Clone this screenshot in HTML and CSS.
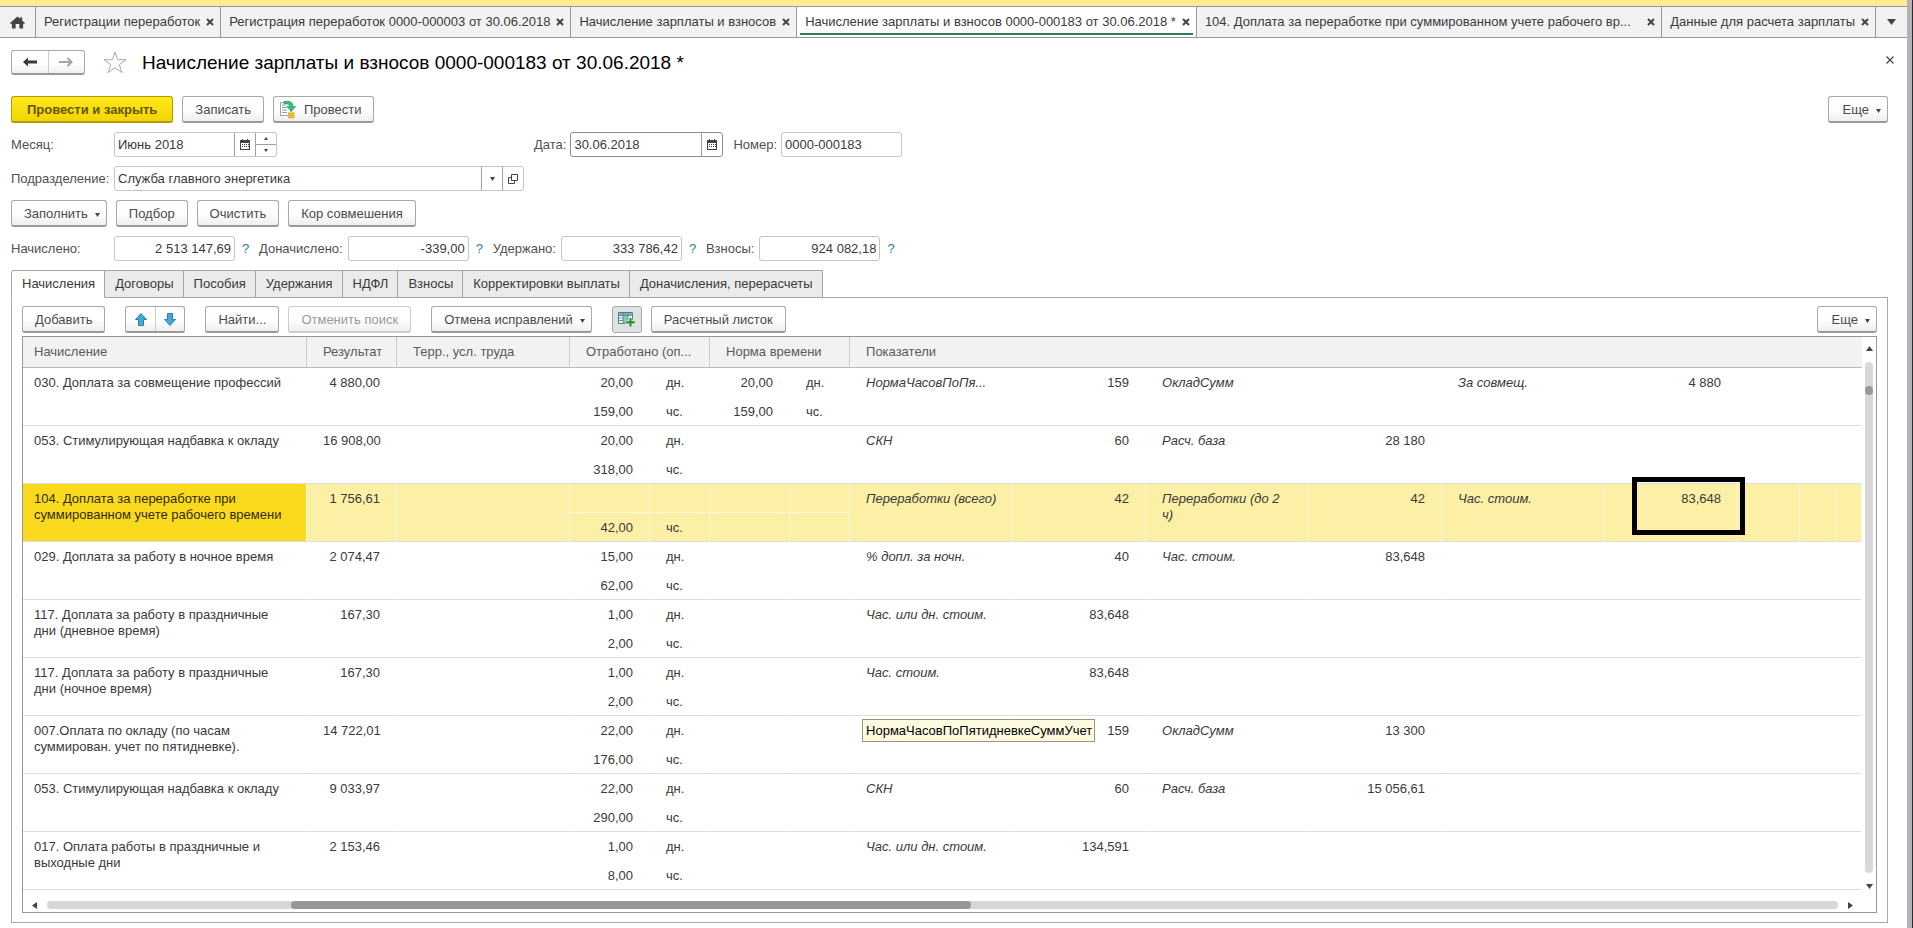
FILE: index.html
```html
<!DOCTYPE html>
<html lang="ru">
<head>
  <meta charset="UTF-8" />
  <title>Начисление зарплаты и взносов</title>
  <link rel="stylesheet" href="styles.css">
</head>
<body>

<!-- общие иконки -->
<svg class="sprite" aria-hidden="true">
  <symbol id="i-calendar" viewBox="0 0 10 11">
    <path d="M0 1h10v10H0zM2 0h1v1H2zM7 0h1v1H7z" fill="#444"/>
    <path d="M1 4h8v6H1z" fill="#fff"/>
    <path d="M2 5h1v1H2zM4 5h1v1H4zM6 5h1v1H6zM8 5h1v1H8zM2 7h1v1H2zM4 7h1v1H4zM6 7h1v1H6zM8 7h1v1H8z" fill="#444"/>
  </symbol>
  <symbol id="i-close" viewBox="0 0 8 8">
    <path d="M1 1l6 6M7 1L1 7" stroke="#444" stroke-width="2"/>
  </symbol>
  <symbol id="i-down" viewBox="0 0 5 4">
    <path d="M0 0h5L2.500 4z" fill="#444"/>
  </symbol>
</svg>

<div class="window">
  <div class="top-strip"></div>

  <nav class="open-tabs" aria-label="Открытые окна">
    <button class="open-tab home" aria-label="Начальная страница">
      <svg width="15" height="13" viewBox="0 0 16 13"><path d="M8 0L0 7l1 1 1-.5V13h4V8h4v5h4V7.500l1 .5 1-1-3-2.600V1h-2v1.600z" fill="#444"/></svg>
    </button>
    <button class="open-tab"><span>Регистрации переработок</span><svg class="x"><use href="#i-close"/></svg></button>
    <button class="open-tab"><span>Регистрация переработок 0000-000003 от 30.06.2018</span><svg class="x"><use href="#i-close"/></svg></button>
    <button class="open-tab"><span>Начисление зарплаты и взносов</span><svg class="x"><use href="#i-close"/></svg></button>
    <button class="open-tab active"><span>Начисление зарплаты и взносов 0000-000183 от 30.06.2018 *</span><svg class="x"><use href="#i-close"/></svg></button>
    <button class="open-tab wide"><span>104. Доплата за переработке при суммированном учете рабочего вр...</span><svg class="x"><use href="#i-close"/></svg></button>
    <button class="open-tab"><span>Данные для расчета зарплаты</span><svg class="x"><use href="#i-close"/></svg></button>
    <button class="open-tab more" aria-label="Все окна"><svg width="9" height="6" viewBox="0 0 9 6"><path d="M0 0h9L4.500 6z" fill="#444"/></svg></button>
  </nav>

  <main class="form">
    <header class="title-bar">
      <div class="btn-pair history">
        <button aria-label="Назад"><svg width="14" height="10" viewBox="0 0 14 10"><path d="M0 5l5-4.500v3h9v3H5v3z" fill="#3a3a3a"/></svg></button>
        <button aria-label="Вперед"><svg width="14" height="10" viewBox="0 0 14 10"><path d="M0 5h13M8.500 1l4 4-4 4" fill="none" stroke="#a5a5a5" stroke-width="2"/></svg></button>
      </div>
      <svg class="star" width="24" height="23" viewBox="0 0 24 23"><path d="M12 1l2.700 7.700H23l-6.600 4.900 2.500 8L12 16.800l-6.900 4.800 2.500-8L1 8.700h8.300z" fill="#fff" stroke="#a3abb5"/></svg>
      <h1>Начисление зарплаты и взносов 0000-000183 от 30.06.2018 *</h1>
      <button class="close-form" aria-label="Закрыть"><svg width="8" height="8" viewBox="0 0 8 8"><path d="M.5.5l7 7M7.500.5l-7 7" stroke="#444" stroke-width="1.200"/></svg></button>
    </header>

    <div class="row commands">
      <button class="btn primary">Провести и закрыть</button>
      <button class="btn">Записать</button>
      <button class="btn with-icon">
        <svg width="16" height="19" viewBox="0 0 16 19">
          <path d="M.5 2.500h10.500v13H.5z" fill="#fff" stroke="#9aa5ab"/>
          <path d="M2 5h4M2 7.500h5M2 10h5M2 12.500h5" stroke="#8aa0ac"/>
          <path d="M4 1.500c5-1 9 .5 9 5h2.500L11.300 11.500 7 6.500h2.700C9.700 4.500 8 3.500 4 3.700z" fill="#2fc47b" stroke="#17834b" stroke-width=".6"/>
          <path d="M8 12h6.500v6H8z" fill="#f5d33f"/>
          <path d="M8 13.800h6.500M8 15.800h6.500M8 17.800h6.500" stroke="#b9962a" stroke-width=".7"/>
        </svg>
        Провести
      </button>
      <button class="btn menu right">Еще<svg class="arr"><use href="#i-down"/></svg></button>
    </div>

    <div class="row fields">
      <label class="lead" for="month">Месяц:</label>
      <div class="field">
        <input class="short" id="month" type="text" value="Июнь 2018">
        <button aria-label="Календарь"><svg width="10" height="11"><use href="#i-calendar"/></svg></button>
        <div class="spin">
          <button aria-label="Больше"><svg width="4" height="3" viewBox="0 0 4 3"><path d="M0 3h4L2 0z" fill="#444"/></svg></button>
          <button aria-label="Меньше"><svg width="4" height="3" viewBox="0 0 4 3"><path d="M0 0h4L2 3z" fill="#444"/></svg></button>
        </div>
      </div>
      <label class="date-label" for="date">Дата:</label>
      <div class="field dark">
        <input class="date" id="date" type="text" value="30.06.2018">
        <button aria-label="Календарь"><svg width="10" height="11"><use href="#i-calendar"/></svg></button>
      </div>
      <label class="number-label" for="number">Номер:</label>
      <div class="field"><input class="short" id="number" type="text" value="0000-000183"></div>
    </div>

    <div class="row fields">
      <label class="lead" for="dept">Подразделение:</label>
      <div class="field">
        <input class="long" id="dept" type="text" value="Служба главного энергетика">
        <button aria-label="Выбрать"><svg width="5" height="4"><use href="#i-down"/></svg></button>
        <button aria-label="Открыть"><svg width="10" height="10" viewBox="0 0 10 10"><path d="M3.500.5h6v6h-6zM3.500 3.500h-3v6h6v-3" fill="none" stroke="#444"/></svg></button>
      </div>
    </div>

    <div class="row commands">
      <button class="btn menu">Заполнить<svg class="arr"><use href="#i-down"/></svg></button>
      <button class="btn">Подбор</button>
      <button class="btn">Очистить</button>
      <button class="btn">Кор совмешения</button>
    </div>

    <div class="row totals">
      <label class="lead" for="accrued">Начислено:</label>
      <div class="field"><input class="short num" id="accrued" type="text" value="2 513 147,69"></div><a class="help" href="#">?</a>
      <label for="added">Доначислено:</label>
      <div class="field"><input class="short num" id="added" type="text" value="-339,00"></div><a class="help" href="#">?</a>
      <label for="withheld">Удержано:</label>
      <div class="field"><input class="short num" id="withheld" type="text" value="333 786,42"></div><a class="help" href="#">?</a>
      <label for="fees">Взносы:</label>
      <div class="field"><input class="short num" id="fees" type="text" value="924 082,18"></div><a class="help" href="#">?</a>
    </div>

    <div class="pages" role="tablist">
      <button class="page active" role="tab" aria-selected="true">Начисления</button>
      <button class="page" role="tab">Договоры</button>
      <button class="page" role="tab">Пособия</button>
      <button class="page" role="tab">Удержания</button>
      <button class="page" role="tab">НДФЛ</button>
      <button class="page" role="tab">Взносы</button>
      <button class="page" role="tab">Корректировки выплаты</button>
      <button class="page" role="tab">Доначисления, перерасчеты</button>
    </div>

    <section class="panel">
      <div class="toolbar">
        <button class="btn">Добавить</button>
        <div class="btn-pair move">
          <button aria-label="Вверх"><svg width="12" height="13" viewBox="0 0 12 13"><path d="M6 .5l5.500 6H8.500v6h-5v-6H.5z" fill="#45a6d8" stroke="#2a7fae"/></svg></button>
          <button aria-label="Вниз"><svg width="12" height="13" viewBox="0 0 12 13"><path d="M6 12.500l5.500-6H8.500v-6h-5v6H.5z" fill="#45a6d8" stroke="#2a7fae"/></svg></button>
        </div>
        <button class="btn">Найти...</button>
        <button class="btn near" disabled>Отменить поиск</button>
        <button class="btn menu">Отмена исправлений<svg class="arr"><use href="#i-down"/></svg></button>
        <button class="btn toggle" aria-label="Показывать колонки" aria-pressed="true">
          <svg width="17" height="15" viewBox="0 0 17 15">
            <path d="M.5.5h14v11H.5z" fill="#fff" stroke="#44808c"/>
            <path d="M5 1h5v10.500H5z" fill="#8fc4b4"/>
            <path d="M1 1h13.500v2H1z" fill="#7db3bd"/>
            <path d="M5 1v10.500M10 1v10.500M1 3.500h13M1 6h4M1 8.500h4" stroke="#44808c" stroke-width=".8"/>
            <path d="M12.500 5.500v9M8 10h9" stroke="#dfe1e2" stroke-width="3.500"/>
            <path d="M12.500 6v8.500M8.200 10.200h8.600" stroke="#2f8a2b" stroke-width="2"/>
          </svg>
        </button>
        <button class="btn near">Расчетный листок</button>
        <button class="btn menu right">Еще<svg class="arr"><use href="#i-down"/></svg></button>
      </div>

      <div class="grid">
        <div class="grid-body">
          <table>
            <colgroup>
              <col class="c-name"><col class="c-sum"><col class="c-terr">
              <col class="c-val"><col class="c-unit"><col class="c-val"><col class="c-unit">
              <col class="c-ind"><col class="c-indval"><col class="c-ind"><col class="c-indval"><col class="c-ind"><col class="c-indval">
              <col class="c-tail"><col class="c-tail2"><col>
            </colgroup>
            <thead>
              <tr>
                <th>Начисление</th>
                <th>Результат</th>
                <th>Терр., усл. труда</th>
                <th colspan="2">Отработано (оп...</th>
                <th colspan="2">Норма времени</th>
                <th colspan="9">Показатели</th>
              </tr>
            </thead>
            <tbody>
              <tr>
                <td rowspan="2">030. Доплата за совмещение профессий</td><td rowspan="2" class="num">4 880,00</td><td rowspan="2"></td>
                <td class="num">20,00</td><td>дн.</td><td class="num">20,00</td><td>дн.</td>
                <td rowspan="2" class="ind">НормаЧасовПоПя...</td><td rowspan="2" class="num">159</td>
                <td rowspan="2" class="ind">ОкладСумм</td><td rowspan="2"></td>
                <td rowspan="2" class="ind">За совмещ.</td><td rowspan="2" class="num">4 880</td><td rowspan="2" colspan="3"></td>
              </tr>
              <tr><td class="num">159,00</td><td>чс.</td><td class="num">159,00</td><td>чс.</td></tr>
            </tbody>
            <tbody>
              <tr>
                <td rowspan="2">053. Стимулирующая надбавка к окладу</td><td rowspan="2" class="num">16 908,00</td><td rowspan="2"></td>
                <td class="num">20,00</td><td>дн.</td><td></td><td></td>
                <td rowspan="2" class="ind">СКН</td><td rowspan="2" class="num">60</td>
                <td rowspan="2" class="ind">Расч. база</td><td rowspan="2" class="num">28 180</td><td rowspan="2" colspan="5"></td>
              </tr>
              <tr><td class="num">318,00</td><td>чс.</td><td></td><td></td></tr>
            </tbody>
            <tbody class="selected">
              <tr>
                <td rowspan="2" class="current">104. Доплата за переработке при суммированном учете рабочего времени</td><td rowspan="2" class="num">1 756,61</td><td rowspan="2"></td>
                <td></td><td></td><td></td><td></td>
                <td rowspan="2" class="ind">Переработки (всего)</td><td rowspan="2" class="num">42</td>
                <td rowspan="2" class="ind">Переработки (до 2 ч)</td><td rowspan="2" class="num">42</td>
                <td rowspan="2" class="ind">Час. стоим.</td><td rowspan="2" class="num marked">83,648<div class="marker"></div></td>
                <td rowspan="2"></td><td rowspan="2"></td><td rowspan="2"></td>
              </tr>
              <tr><td class="num">42,00</td><td>чс.</td><td></td><td></td></tr>
            </tbody>
            <tbody>
              <tr>
                <td rowspan="2">029. Доплата за работу в ночное время</td><td rowspan="2" class="num">2 074,47</td><td rowspan="2"></td>
                <td class="num">15,00</td><td>дн.</td><td></td><td></td>
                <td rowspan="2" class="ind">% допл. за ночн.</td><td rowspan="2" class="num">40</td>
                <td rowspan="2" class="ind">Час. стоим.</td><td rowspan="2" class="num">83,648</td><td rowspan="2" colspan="5"></td>
              </tr>
              <tr><td class="num">62,00</td><td>чс.</td><td></td><td></td></tr>
            </tbody>
            <tbody>
              <tr>
                <td rowspan="2">117. Доплата за работу в праздничные дни (дневное время)</td><td rowspan="2" class="num">167,30</td><td rowspan="2"></td>
                <td class="num">1,00</td><td>дн.</td><td></td><td></td>
                <td rowspan="2" class="ind">Час. или дн. стоим.</td><td rowspan="2" class="num">83,648</td><td rowspan="2" colspan="7"></td>
              </tr>
              <tr><td class="num">2,00</td><td>чс.</td><td></td><td></td></tr>
            </tbody>
            <tbody>
              <tr>
                <td rowspan="2">117. Доплата за работу в праздничные дни (ночное время)</td><td rowspan="2" class="num">167,30</td><td rowspan="2"></td>
                <td class="num">1,00</td><td>дн.</td><td></td><td></td>
                <td rowspan="2" class="ind">Час. стоим.</td><td rowspan="2" class="num">83,648</td><td rowspan="2" colspan="7"></td>
              </tr>
              <tr><td class="num">2,00</td><td>чс.</td><td></td><td></td></tr>
            </tbody>
            <tbody>
              <tr>
                <td rowspan="2">007.Оплата по окладу (по часам суммирован. учет по пятидневке).</td><td rowspan="2" class="num">14 722,01</td><td rowspan="2"></td>
                <td class="num">22,00</td><td>дн.</td><td></td><td></td>
                <td rowspan="2" class="hinted"><div class="tooltip" role="tooltip">НормаЧасовПоПятидневкеСуммУчет</div></td><td rowspan="2" class="num">159</td>
                <td rowspan="2" class="ind">ОкладСумм</td><td rowspan="2" class="num">13 300</td><td rowspan="2" colspan="5"></td>
              </tr>
              <tr><td class="num">176,00</td><td>чс.</td><td></td><td></td></tr>
            </tbody>
            <tbody>
              <tr>
                <td rowspan="2">053. Стимулирующая надбавка к окладу</td><td rowspan="2" class="num">9 033,97</td><td rowspan="2"></td>
                <td class="num">22,00</td><td>дн.</td><td></td><td></td>
                <td rowspan="2" class="ind">СКН</td><td rowspan="2" class="num">60</td>
                <td rowspan="2" class="ind">Расч. база</td><td rowspan="2" class="num">15 056,61</td><td rowspan="2" colspan="5"></td>
              </tr>
              <tr><td class="num">290,00</td><td>чс.</td><td></td><td></td></tr>
            </tbody>
            <tbody>
              <tr>
                <td rowspan="2">017. Оплата работы в праздничные и выходные дни</td><td rowspan="2" class="num">2 153,46</td><td rowspan="2"></td>
                <td class="num">1,00</td><td>дн.</td><td></td><td></td>
                <td rowspan="2" class="ind">Час. или дн. стоим.</td><td rowspan="2" class="num">134,591</td><td rowspan="2" colspan="7"></td>
              </tr>
              <tr><td class="num">8,00</td><td>чс.</td><td></td><td></td></tr>
            </tbody>
          </table>
          <div class="vscroll">
            <svg width="7" height="5" viewBox="0 0 7 5"><path d="M0 5h7L3.500 0z" fill="#444"/></svg>
            <div class="track"><div class="thumb"></div></div>
            <svg width="7" height="5" viewBox="0 0 7 5"><path d="M0 0h7L3.500 5z" fill="#444"/></svg>
          </div>
        </div>
        <div class="hscroll">
          <svg width="5" height="7" viewBox="0 0 5 7"><path d="M5 0v7L0 3.500z" fill="#444"/></svg>
          <div class="track"><div class="thumb"></div></div>
          <svg width="5" height="7" viewBox="0 0 5 7"><path d="M0 0v7l5-3.500z" fill="#444"/></svg>
        </div>
      </div>
    </section>
  </main>
</div>

</body>
</html>
```
FILE: styles.css
```css
* {
  box-sizing: border-box;
}

body {
  margin: 0;
  font-family: "Liberation Sans", Arial, sans-serif;
  font-size: 13px;
  line-height: 16px;
  color: #3a3a3a;
  background: #fff;
  border-right: 1px solid #2b2b33;
}

button, input {
  font: inherit;
  color: inherit;
  margin: 0;
}

button {
  padding: 0;
  border: none;
  background: none;
  white-space: nowrap;
}

svg {
  flex: none;
  display: block;
}

.sprite {
  position: absolute;
  width: 0;
  height: 0;
}

.window {
  min-height: 100vh;
  border-right: 5px solid #b4b2b5;
}

.top-strip {
  height: 6px;
  background: #feeb95;
}

/* открытые окна */
.open-tabs {
  display: flex;
  height: 32px;
  background: #f2f2f2;
  border-top: 1px solid #989898;
  border-bottom: 1px solid #989898;
}

.open-tab {
  display: flex;
  align-items: center;
  gap: 6px;
  padding: 0 6px 0 8px;
  border-right: 1px solid #989898;
}

.open-tab .x {
  width: 8px;
  height: 8px;
}

.open-tab.home {
  width: 36px;
  padding-left: 10px;
}

.open-tab.active {
  position: relative;
  background: #fff;
}

.open-tab.active::after {
  content: "";
  position: absolute;
  left: 3px;
  right: 3px;
  bottom: 2px;
  height: 2px;
  background: #2f7d54;
}

.open-tab.wide {
  flex: 1;
  justify-content: space-between;
}

.open-tab.more {
  width: 31px;
  padding: 0 11px;
  border-right: none;
}

/* форма */
.form {
  padding: 12px 19px 5px 11px;
}

.title-bar {
  display: flex;
  align-items: center;
  height: 25px;
  margin-bottom: 21px;
}

.star {
  margin: 0 15px 0 18px;
}

h1 {
  margin: 0;
  font-size: 19px;
  line-height: 24px;
  font-weight: normal;
  color: #000;
}

.close-form {
  margin: 0 -6px 6px auto;
}

.btn-pair {
  display: flex;
  border: 1px solid #a8a8a8;
  border-bottom: 2px solid #999;
  border-radius: 3px;
  background: linear-gradient(#fff 50%, #f0f0f0);
}

.btn-pair button {
  flex: 1;
  display: flex;
  align-items: center;
  justify-content: center;
}

.btn-pair button + button {
  border-left: 1px solid #ccc;
}

.history {
  width: 74px;
  height: 25px;
}

.move {
  width: 60px;
  height: 27px;
}

.row {
  display: flex;
  align-items: center;
  height: 25px;
  margin-bottom: 9px;
}

.row.commands {
  height: 27px;
  gap: 9px;
}

.btn {
  display: flex;
  align-items: center;
  justify-content: center;
  height: 27px;
  padding: 1px 12px 0;
  border: 1px solid #a8a8a8;
  border-bottom: 2px solid #999;
  border-radius: 3px;
  background: linear-gradient(#fff 50%, #efefef);
  color: #4a4a4a;
}

.btn.primary {
  padding: 1px 15px 0;
  background: linear-gradient(#ffe81a, #f3d500);
  border-color: #b09a10;
  color: #655500;
  font-weight: bold;
}

.btn.with-icon {
  padding-left: 6px;
  gap: 8px;
}

.btn.menu {
  gap: 7px;
  padding-right: 6px;
}

.btn.right {
  padding-left: 14px;
}

.btn .arr {
  width: 5px;
  height: 4px;
  margin-top: 2px;
}

.btn:disabled {
  color: #999;
  border-color: #ccc;
}

.btn.toggle {
  width: 30px;
  padding: 0;
  background: #dfe1e2;
  border: 1px solid #a8a8a8;
}

.right {
  margin-left: auto;
}

label {
  color: #4f4f4f;
  white-space: nowrap;
}

label.lead {
  width: 103px;
}

.field {
  display: flex;
  height: 25px;
  border: 1px solid #c4c4c4;
  border-radius: 3px;
  background: #fff;
}

.field.dark {
  border-color: #8f8f8f;
}

.field input {
  border: none;
  padding: 0 3px;
  background: none;
  outline: none;
}

.field > button,
.spin {
  width: 21px;
  display: flex;
  align-items: center;
  justify-content: center;
  border-left: 1px solid #a0a0a0;
}

.spin {
  flex-direction: column;
}

.spin button {
  flex: 1;
  width: 20px;
  display: flex;
  align-items: center;
  justify-content: center;
}

.spin button + button {
  border-top: 1px solid #a0a0a0;
}

.short {
  width: 119px;
}

.date {
  width: 130px;
}

.long {
  width: 366px;
}

.date-label {
  margin: 0 4px 0 257px;
}

.number-label {
  margin: 0 4px 0 10px;
}

.num {
  text-align: right;
  white-space: nowrap;
}

.totals .help {
  width: 24px;
  padding-left: 7px;
  color: #1b7fa8;
  text-decoration: none;
}

.totals label + .field {
  margin-left: 5px;
}

.totals .lead + .field {
  margin-left: 0;
}

/* страницы */
.pages {
  display: flex;
  margin-bottom: -1px;
}

.page {
  height: 28px;
  padding: 0 9px 0 10px;
  border: 1px solid #a5a5a5;
  border-left: none;
  background: #ebebeb;
}

.page.active {
  border-left: 1px solid #a5a5a5;
  border-bottom-color: #fff;
  border-radius: 3px 0 0 0;
  background: #fff;
}

.panel {
  padding: 8px 10px 9px;
  border: 1px solid #a9a9a9;
}

.toolbar {
  display: flex;
  gap: 20px;
  margin-bottom: 3px;
}

.toolbar .near {
  margin-left: -11px;
}

.toolbar .right {
  margin-left: auto;
}

/* таблица начислений */
.grid {
  border: 1px solid #989898;
}

.grid-body {
  display: flex;
}

table {
  flex: 1;
  width: 100%;
  table-layout: fixed;
  border-collapse: separate;
  border-spacing: 0;
}

.c-name { width: 284px; }
.c-sum { width: 90px; }
.c-terr { width: 173px; }
.c-val { width: 80px; }
.c-unit { width: 60px; }
.c-ind { width: 162px; }
.c-indval { width: 134px; }
.c-tail { width: 62px; }
.c-tail2 { width: 36px; }

th {
  height: 31px;
  padding: 0 0 0 16px;
  text-align: left;
  font-weight: normal;
  color: #5a5a5a;
  white-space: nowrap;
  background: #f2f2f2;
  border-right: 1px solid #ccc;
  border-bottom: 1px solid #bbb;
}

th:last-child {
  border-right: none;
}

td {
  height: 29px;
  padding: 7px 16px 0;
  vertical-align: top;
  border-right: 1px solid transparent;
}

th:first-child,
td[rowspan]:first-child {
  padding-left: 11px;
}

td[rowspan],
tr:last-child td {
  border-bottom: 1px solid #dedede;
}

td.ind {
  padding-right: 14px;
  font-style: italic;
}

.selected td {
  background: #fcf0a6;
  border-right-color: #fdf8dc;
}

.selected tr:first-child td:not([rowspan]) {
  border-bottom: 1px solid #fdf8dc;
}

.selected td.current {
  background: #f9da1e;
  color: #332b00;
}

.marked,
.hinted {
  position: relative;
}

/* рамка вокруг значения */
.marker {
  position: absolute;
  left: 28px;
  top: -7px;
  width: 113px;
  height: 58px;
  border: 5px solid #000;
}

.tooltip {
  position: absolute;
  left: 12px;
  top: 3px;
  padding: 3px 2px 2px 3px;
  border: 1px solid #98987c;
  background: #fdfae0;
  color: #000;
  white-space: nowrap;
}

.vscroll {
  width: 14px;
  display: flex;
  flex-direction: column;
  align-items: center;
  gap: 11px;
  padding: 9px 0 1px;
}

.vscroll .track {
  flex: 1;
  width: 8px;
  padding-top: 24px;
  border-radius: 4px;
  background: #d8d8d8;
}

.vscroll .thumb {
  height: 9px;
  border-radius: 4px;
  background: #999;
}

.hscroll {
  display: flex;
  align-items: center;
  gap: 10px;
  height: 22px;
  padding: 8px 23px 0 9px;
}

.hscroll .track {
  flex: 1;
  height: 8px;
  border-radius: 4px;
  background: #d8d6d7;
}

.hscroll .thumb {
  width: 38%;
  height: 8px;
  margin-left: 13.600%;
  border-radius: 4px;
  background: #999698;
}
```
